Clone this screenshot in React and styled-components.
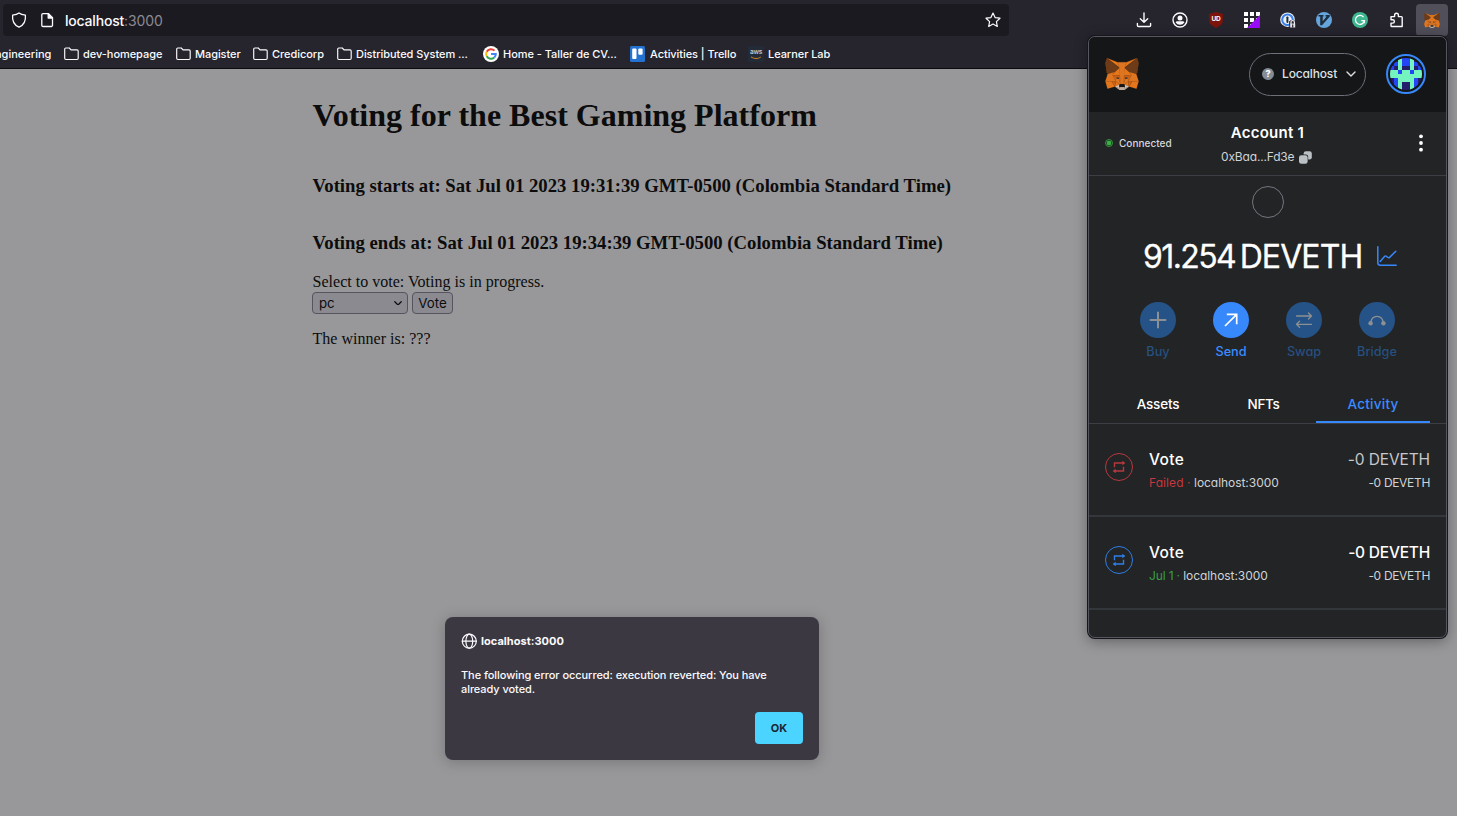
import React from "react";
import styled, { createGlobalStyle } from "styled-components";

const Global = createGlobalStyle`
  * { box-sizing: border-box; }
  html, body { margin: 0; padding: 0; }
  body { background: #98989a; overflow: hidden; }
`;

const ui = `"Inter", "Liberation Sans", sans-serif`;
const serif = `"Liberation Serif", "Times New Roman", serif`;

const Window = styled.div`
  position: relative;
  width: 1457px;
  height: 816px;
  overflow: hidden;
  display: flex;
  flex-direction: column;
  background: #98989a;
`;

/* ---------- browser chrome ---------- */

const Chrome = styled.header`
  height: 69px;
  flex: none;
  background: #26252e;
  border-bottom: 1px solid #0d0c11;
  font-family: ${ui};
  color: #fbfbfe;
`;

const Toolbar = styled.div`
  height: 40px;
  display: flex;
  align-items: center;
  padding-left: 3px;
`;

const UrlBar = styled.div`
  width: 1006px;
  height: 32px;
  border-radius: 4px;
  background: #1b1a20;
  display: flex;
  align-items: center;
  padding: 0 8px;
  svg { flex: none; }
`;

const UrlText = styled.div`
  flex: 1;
  margin-left: 10px;
  font-size: 14px;
  font-weight: 500;
  letter-spacing: -0.2px;
  line-height: 20px;
  padding-top: 1px;
  span { color: #8b8a92; font-weight: 400; letter-spacing: -0.1px; }
`;

const Extensions = styled.div`
  margin-left: auto;
  display: flex;
  align-items: center;
  height: 32px;
  margin-right: 9px;
`;

const ExtButton = styled.div`
  width: 36px;
  height: 32px;
  display: flex;
  align-items: center;
  justify-content: center;
  svg { display: block; }
`;

const ActiveExt = styled(ExtButton)`
  width: 32px;
  margin-left: 2px;
  border-radius: 4px;
  background: #504f5a;
`;

const Bookmarks = styled.nav`
  height: 28px;
  display: flex;
  align-items: center;
`;

const Bookmark = styled.div`
  display: flex;
  align-items: center;
  gap: ${(p) => p.$gap || 4}px;
  width: ${(p) => p.$w}px;
  margin-left: ${(p) => p.$ml || 0}px;
  flex: none;
  font-size: 11px;
  font-weight: 500;
  white-space: nowrap;
  letter-spacing: ${(p) => p.$ls || 0}px;
  line-height: 16px;
  svg { flex: none; display: block; }
`;

/* ---------- page ---------- */

const Page = styled.main`
  flex: 1;
  padding: 28px 0 0 312.5px;
  font-family: ${serif};
  font-size: 16px;
  line-height: 18px;
  color: #0c0c0d;
`;

const Title = styled.h1`
  margin: 0;
  font-size: 32px;
  line-height: 36px;
  letter-spacing: 0.01px;
`;

const Sub = styled.h3`
  margin: ${(p) => p.$top}px 0 0;
  font-size: 18.72px;
  line-height: 21px;
`;

const Line = styled.div`
  margin-top: ${(p) => p.$top}px;
  letter-spacing: 0.02px;
`;

const Form = styled.div`
  display: flex;
  gap: 4px;
  margin: 1px 0 0 -0.5px;
`;

const SelectBox = styled.div`
  width: 96px;
  height: 22px;
  border: 1px solid #55545f;
  border-radius: 4px;
  background: #8b8a91;
  display: flex;
  align-items: center;
  justify-content: space-between;
  padding: 0 5px 0 6px;
  font-family: ${ui};
  font-size: 13.3px;
  letter-spacing: -0.1px;
`;

const VoteButton = styled.button`
  width: 41px;
  height: 22px;
  padding: 0;
  border: 1px solid #55545f;
  border-radius: 4px;
  background: #8b8a91;
  color: #0c0c0d;
  font-family: ${ui};
  font-size: 13.3px;
`;

/* ---------- alert ---------- */

const Dialog = styled.div`
  position: absolute;
  left: 445px;
  top: 617px;
  width: 374px;
  height: 143px;
  padding: 15px 16px 16px;
  border-radius: 8px;
  background: #3b3842;
  box-shadow: 0 2px 14px rgba(20, 20, 26, 0.25);
  font-family: ${ui};
  color: #fbfbfe;
  display: flex;
  flex-direction: column;
`;

const Origin = styled.div`
  display: flex;
  align-items: center;
  gap: 4px;
  height: 17px;
  font-size: 11px;
  font-weight: 700;
  letter-spacing: 0.03px;
`;

const Message = styled.p`
  margin: 19px 0 0;
  font-size: 11px;
  font-weight: 500;
  line-height: 14px;
  letter-spacing: -0.065px;
`;

const OkButton = styled.button`
  margin: auto 0 0 auto;
  width: 48px;
  height: 32px;
  border: 0;
  border-radius: 4px;
  background: #4ad4ff;
  color: #1c2530;
  font-family: ${ui};
  font-size: 11px;
  font-weight: 700;
`;

/* ---------- wallet popup ---------- */

const Popup = styled.aside`
  position: absolute;
  left: 1088px;
  top: 36px;
  width: 359px;
  height: 602px;
  border: 1px solid #565661;
  border-radius: 7px;
  background: #222426;
  box-shadow: 0 0 0 1px #17161b, 0 3px 14px rgba(10, 10, 14, 0.4);
  overflow: hidden;
  font-family: ${ui};
  font-feature-settings: "cv11";
  color: #fff;
`;

const WalletHeader = styled.div`
  height: 75px;
  background: #141618;
  display: flex;
  align-items: center;
  padding: 0 20px 1px 16px;
`;

const NetworkPill = styled.div`
  margin: 1px 20px 0 auto;
  width: 117px;
  height: 43px;
  border: 1px solid #6d6f79;
  border-radius: 22px;
  display: flex;
  align-items: center;
  padding: 0 9px 2px 12px;
  font-size: 12px;
  font-weight: 500;
  letter-spacing: -0.15px;
  color: #dfe1e3;
  svg:last-child { margin-left: auto; }
`;

const QMark = styled.span`
  width: 12px;
  height: 12px;
  border-radius: 50%;
  margin-right: 8px;
  background: #848c96;
  color: #fff;
  font-size: 9px;
  font-weight: 800;
  line-height: 12px;
  text-align: center;
`;

const AccountRow = styled.div`
  height: 64px;
  border-bottom: 1px solid #3b3e42;
  display: grid;
  grid-template-columns: 110px 1fr 110px;
  align-items: center;
  padding: 0 16px 1px;
`;

const Connected = styled.div`
  display: flex;
  align-items: center;
  gap: 6px;
  font-size: 10px;
  font-weight: 500;
  letter-spacing: 0.02px;
  color: #d6d9dc;
`;

const Dot = styled.i`
  width: 8px;
  height: 8px;
  border-radius: 50%;
  border: 1px solid #2f9a38;
  background: radial-gradient(circle, #3fae49 0 2px, #1d3a22 2.6px);
`;

const Account = styled.div`
  text-align: center;
  padding-top: 1px;
`;

const AccountName = styled.div`
  font-size: 15px;
  font-weight: 600;
  line-height: 22px;
  letter-spacing: 0.25px;
`;

const Address = styled.div`
  display: flex;
  align-items: center;
  justify-content: center;
  gap: 5px;
  font-size: 12px;
  line-height: 16px;
  margin-top: 5px;
  padding-right: 1.5px;
  white-space: nowrap;
  letter-spacing: -0.17px;
  color: #d0d3d6;
`;

const Menu = styled.div`
  justify-self: end;
  width: 18px;
  display: flex;
  justify-content: center;
`;

const TokenRing = styled.div`
  width: 32px;
  height: 32px;
  margin: 10px auto 0;
  border: 1px solid #73767e;
  border-radius: 50%;
`;

const Balance = styled.div`
  display: flex;
  align-items: center;
  height: 40px;
  margin: 18px 0 0 54px;
  font-size: 32px;
  white-space: nowrap;
  -webkit-text-stroke: 0.3px #fff;
  svg { flex: none; margin-left: auto; margin-right: 49px; }
`;

const Amount = styled.span`
  letter-spacing: -1.6px;
  margin-right: 4.5px;
`;

const Symbol = styled.span`
  letter-spacing: -0.9px;
`;

const Actions = styled.div`
  display: flex;
  justify-content: center;
  margin-top: 26px;
  padding-right: 1px;
`;

const Action = styled.div`
  width: 73px;
  display: flex;
  flex-direction: column;
  align-items: center;
  gap: 5px;
  color: ${(p) => (p.$on ? "#3b8cff" : "#27507f")};
  font-size: 12.7px;
  font-weight: 500;
  line-height: 17px;
`;

const ActionLabel = styled.span`
  margin-left: 1px;
`;

const ActionCircle = styled.div`
  width: 36px;
  height: 36px;
  border-radius: 50%;
  background: ${(p) => (p.$on ? "#3788fb" : "#255387")};
  color: ${(p) => (p.$on ? "#ffffff" : "#8d9093")};
  display: flex;
  align-items: center;
  justify-content: center;
`;

const Tabs = styled.div`
  display: grid;
  grid-template-columns: 106px 105px 114px;
  height: 39px;
  margin-top: 25px;
  padding-left: 16px;
  border-bottom: 1px solid #3b3e42;
`;

const Tab = styled.div`
  text-align: center;
  font-size: 13.5px;
  font-weight: 500;
  line-height: 38px;
  letter-spacing: ${(p) => p.$ls || 0}px;
  color: ${(p) => (p.$on ? "#3b8cff" : "#fff")};
  box-shadow: ${(p) => (p.$on ? "inset 0 -2px 0 #3788fb" : "none")};
`;

const Item = styled.div`
  height: 93px;
  border-bottom: 2px solid #33363b;
  display: flex;
  align-items: flex-start;
  padding: 24px 16px 0;
`;

const ItemIcon = styled.div`
  width: 28px;
  height: 28px;
  margin: 5px 16px 0 0;
  border: 1px solid;
  border-radius: 50%;
  color: ${(p) => p.$c};
  display: flex;
  align-items: center;
  justify-content: center;
`;

const ItemText = styled.div`
  text-align: ${(p) => (p.$right ? "right" : "left")};
  margin-left: ${(p) => (p.$right ? "auto" : "0")};
`;

const ItemTitle = styled.div`
  font-size: 15.5px;
  font-weight: ${(p) => p.$weight || 500};
  line-height: 24px;
  letter-spacing: ${(p) => p.$ls || 0}px;
  color: ${(p) => p.$c || "#fff"};
`;

const ItemSub = styled.div`
  font-size: 12px;
  line-height: 16px;
  margin-top: 3px;
  letter-spacing: ${(p) => p.$ls || 0}px;
  color: #d0d3d6;
`;

const Status = styled.span`
  color: ${(p) => p.$c};
  letter-spacing: ${(p) => p.$ls}px;
`;

/* ---------- drawings ---------- */

const FOX = [
  ["#E2761B", "274.1,35.5 174.6,109.4 193,65.8"],
  ["#E4761B", "44.4,35.5 143.1,110.1 125.6,65.8"],
  ["#E4761B", "238.3,206.8 211.8,247.4 268.5,263 284.8,207.7"],
  ["#E4761B", "33.9,207.7 50.1,263 106.8,247.4 80.3,206.8"],
  ["#E4761B", "103.6,138.2 87.8,162.1 144.1,164.6 142.1,104.1"],
  ["#E4761B", "214.9,138.2 175.9,103.4 174.6,164.6 230.8,162.1"],
  ["#E4761B", "106.8,247.4 140.6,230.9 111.4,208.1"],
  ["#E4761B", "177.9,230.9 211.8,247.4 207.1,208.1"],
  ["#D7C1B3", "211.8,247.4 177.9,230.9 180.6,253 180.3,262.3"],
  ["#D7C1B3", "106.8,247.4 138.3,262.3 138.1,253 140.6,230.9"],
  ["#233447", "138.8,193.5 110.6,185.2 130.5,176.1"],
  ["#233447", "179.7,193.5 188,176.1 208,185.2"],
  ["#CD6116", "106.8,247.4 111.6,206.8 80.3,207.7"],
  ["#CD6116", "207,206.8 211.8,247.4 238.3,207.7"],
  ["#CD6116", "230.8,162.1 174.6,164.6 179.8,193.5 188.1,176.1 208.1,185.2"],
  ["#CD6116", "110.6,185.2 130.6,176.1 138.8,193.5 144.1,164.6 87.8,162.1"],
  ["#E4751F", "87.8,162.1 111.4,208.1 110.6,185.2"],
  ["#E4751F", "208.1,185.2 207.1,208.1 230.8,162.1"],
  ["#E4751F", "144.1,164.6 138.8,193.5 145.4,227.6 146.9,182.7"],
  ["#E4751F", "174.6,164.6 171.9,182.6 173.1,227.6 179.8,193.5"],
  ["#DE7520", "179.8,193.5 173.1,227.6 177.9,230.9 207.1,208.1 208.1,185.2"],
  ["#DE7520", "110.6,185.2 111.4,208.1 140.6,230.9 145.4,227.6 138.8,193.5"],
  ["#C0AD9E", "180.3,262.3 180.6,253 178.1,250.8 140.4,250.8 138.1,253 138.3,262.3 106.8,247.4 117.8,256.4 140.1,271.9 178.4,271.9 200.8,256.4 211.8,247.4"],
  ["#161616", "177.9,230.9 173.1,227.6 145.4,227.6 140.6,230.9 138.1,253 140.4,250.8 178.1,250.8 180.6,253"],
  ["#6E3B18", "278.3,114.2 286.8,73.4 274.1,35.5 177.9,106.9 214.9,138.2 267.2,153.5 278.8,140 273.8,136.4 281.8,129.1 275.6,124.3 283.6,118.2"],
  ["#6E3B18", "31.8,73.4 40.3,114.2 34.9,118.2 42.9,124.3 36.8,129.1 44.8,136.4 39.8,140 51.3,153.5 103.6,138.2 140.6,106.9 44.4,35.5"],
  ["#DE7520", "267.2,153.5 214.9,138.2 230.8,162.1 207.1,208.1 238.3,207.7 284.8,207.7"],
  ["#DE7520", "103.6,138.2 51.3,153.5 33.9,207.7 80.3,207.7 111.4,208.1 87.8,162.1"],
  ["#DE7520", "174.6,164.6 177.9,106.9 193.1,65.8 125.6,65.8 140.6,106.9 144.1,164.6 145.3,182.8 145.4,227.6 173.1,227.6 173.3,182.8"],
];

const Fox = ({ w, h }) => (
  <svg width={w} height={h} viewBox="31 35 256.6 237.6" preserveAspectRatio="none">
    {FOX.map(([fill, points], i) => (
      <polygon key={i} fill={fill} stroke={fill} strokeWidth="1" points={points} />
    ))}
  </svg>
);

/* left half of each identicon row; the right half mirrors it */
const CELLS = ["nngb", "nbgb", "bngn", "ggbg", "gggg", "nbgg", "nbgn", "nbgn"];
const CELL_COLORS = { n: "#241f6b", b: "#2347f5", g: "#74f5c0" };

const Identicon = () => (
  <svg width="40" height="40" viewBox="0 0 40 40">
    <defs>
      <clipPath id="avatar"><circle cx="20" cy="20" r="16" /></clipPath>
    </defs>
    <circle cx="20" cy="20" r="19" fill="#141618" stroke="#3788fb" strokeWidth="2" />
    <g clipPath="url(#avatar)" shapeRendering="crispEdges">
      {CELLS.map((row, y) =>
        (row + [...row].reverse().join("")).split("").map((c, x) => (
          <rect key={x + "-" + y} x={4 + x * 4} y={4 + y * 4} width="4" height="4" fill={CELL_COLORS[c]} />
        ))
      )}
    </g>
  </svg>
);

const Stroke = ({ w = 16, h = 16, vb, sw = 1.3, children, ...rest }) => (
  <svg width={w} height={h} viewBox={vb || `0 0 ${w} ${h}`} fill="none" stroke="currentColor"
    strokeWidth={sw} strokeLinecap="round" strokeLinejoin="round" {...rest}>
    {children}
  </svg>
);

const Shield = () => (
  <Stroke><path d="M8 .9C9.6 2.2 12 2.9 14.4 3.2c.5 5-1.300 9.700-6.400 11.900C2.900 12.900 1.100 8.200 1.600 3.200 4 2.900 6.400 2.200 8 .9z" /></Stroke>
);

const DocIcon = styled.span`
  display: flex;
  margin-left: 12px;
`;

const PageIcon = () => (
  <DocIcon>
    <Stroke>
      <path d="M4 1.700h5.500l4 4v7.600a1.200 1.200 0 0 1-1.200 1.200H4a1.200 1.200 0 0 1-1.200-1.200V2.900A1.200 1.200 0 0 1 4 1.700z" />
      <path d="M9.200 1.700v4.300h4.300z" fill="currentColor" />
    </Stroke>
  </DocIcon>
);

const Star = () => (
  <Stroke sw={1.2}><path d="M8 1.100l2.100 4.500 4.900.6-3.600 3.400.9 4.900L8 12.100l-4.300 2.400.9-4.900L1 6.200l4.900-.6z" /></Stroke>
);

const Folder = () => (
  <Stroke w={15} h={14} sw={1.150}>
    <path d="M1.800 1h3.500l1.700 1.900h6a1.200 1.200 0 0 1 1.200 1.200v7.200a1.200 1.200 0 0 1-1.200 1.200H1.900A1.200 1.200 0 0 1 .7 11.300V2.100A1.100 1.100 0 0 1 1.800 1z" />
  </Stroke>
);

const Google = () => (
  <svg width="16" height="16" viewBox="0 0 16 16">
    <circle cx="8" cy="8" r="8" fill="#fff" />
    <g fill="none" strokeWidth="2">
      <path d="M11.500 4.600A4.900 4.900 0 0 0 3.700 5.700" stroke="#ea4335" />
      <path d="M3.700 5.700a4.900 4.900 0 0 0 0 4.600" stroke="#fbbc05" />
      <path d="M3.700 10.300a4.900 4.900 0 0 0 7.600 1.200" stroke="#34a853" />
      <path d="M11.300 11.500A4.700 4.700 0 0 0 12.800 8H8.100" stroke="#4285f4" />
    </g>
  </svg>
);

const Trello = () => (
  <svg width="15" height="16" viewBox="0 0 15 16">
    <rect width="15" height="16" rx="1.500" fill="#2472cf" />
    <rect x="2.200" y="2.500" width="4.300" height="10.500" rx="1" fill="#fff" />
    <rect x="8.300" y="2.500" width="4.300" height="6.300" rx="1" fill="#fff" />
  </svg>
);

const AwsTile = styled.span`
  width: 16px;
  height: 16px;
  background: #232a38;
  display: flex;
  flex-direction: column;
  align-items: center;
  font-size: 6.5px;
  font-weight: 600;
  line-height: 7px;
  letter-spacing: -0.3px;
  padding-top: 3px;
  color: #c5c8ce;
`;

const Aws = () => (
  <AwsTile>
    aws
    <svg width="12" height="4" viewBox="0 0 12 4"><path d="M1 .8C4 3 8 3 10.800 1" fill="none" stroke="#d98a1c" /></svg>
  </AwsTile>
);

const Download = () => (
  <Stroke sw={1.400}><path d="M8 1v9M4.300 6.700L8 10.300l3.700-3.600M1.400 11.500v2a1 1 0 0 0 1 1h11.200a1 1 0 0 0 1-1v-2" /></Stroke>
);

const Person = () => (
  <svg width="16" height="16" viewBox="0 0 16 16">
    <circle cx="8" cy="8" r="7" fill="none" stroke="#fbfbfe" strokeWidth="1.400" />
    <circle cx="8" cy="5.900" r="2.500" fill="#fbfbfe" />
    <path d="M3.600 10.300c.5-.8 1-1 1.900-1h5c.9 0 1.400.2 1.900 1-.9 1.700-2.500 2.500-4.400 2.500s-3.500-.8-4.400-2.500z" fill="#fbfbfe" />
  </svg>
);

const UBadge = styled.span`
  width: 14px;
  height: 16px;
  background: #7c140c;
  clip-path: polygon(50% 0, 100% 12%, 97% 65%, 85% 82%, 50% 100%, 15% 82%, 3% 65%, 0 12%);
  color: #fff;
  font-size: 6.500px;
  font-weight: 700;
  letter-spacing: -0.2px;
  text-align: center;
  line-height: 15px;
`;

const GridIcon = () => (
  <svg width="16" height="16" viewBox="0 0 16 16" shapeRendering="crispEdges">
    <g fill="#fff">
      {[0, 6, 12].map((y) => [0, 6, 12].map((x) => <rect key={x + y * 20} x={x} y={y} width="4" height="4" />))}
    </g>
    <path d="M16 3V16H3z" fill="#9a0cf8" shapeRendering="auto" />
  </svg>
);

const OnePass = () => (
  <svg width="16" height="16" viewBox="0 0 16 16">
    <circle cx="7.500" cy="7.700" r="7.300" fill="#eef1f6" />
    <circle cx="7.500" cy="7.700" r="5.300" fill="none" stroke="#3b82e8" strokeWidth="2" />
    <rect x="6.400" y="4.500" width="2" height="6.400" rx=".8" fill="#1d2c44" />
    <path d="M9 9.500l2-1.500h3l2 2v6H9.500z" fill="#26252e" />
    <path d="M11 12v-1.800a1.700 1.700 0 0 1 3.400 0V12" fill="none" stroke="#eef1f6" strokeWidth="1.200" />
    <path d="M10.200 11.600h5v3.900h-5z" fill="#e6e8ee" />
    <path d="M12.100 12.600h1.200v2.900h-1.200z" fill="#26252e" />
  </svg>
);

const Vim = () => (
  <svg width="16" height="16" viewBox="0 0 16 16">
    <circle cx="8" cy="8" r="8" fill="#65a5dd" />
    <path d="M2.500 3h5v1.500H6.700v4.800l4-4.800H9.500V3h4.300v1.500L6 13.300H4.200V4.500H2.500z" fill="#1f2c3c" />
  </svg>
);

const Grammarly = () => (
  <svg width="16" height="16" viewBox="0 0 16 16">
    <circle cx="8" cy="8" r="8" fill="#3fb68f" />
    <path d="M11.500 5.100a4.500 4.500 0 1 0 .9 3.500H9.300" fill="none" stroke="#fff" strokeWidth="1.300" />
    <path d="M12.300 8.600v2.600" fill="none" stroke="#fff" strokeWidth="1.200" />
  </svg>
);

const Puzzle = () => (
  <Stroke sw={1.400}>
    <path d="M3 4.600h3.600V3.100a1.900 1.900 0 0 1 3.800 0v1.500h3a.8.8 0 0 1 .8.8v9.100H3.800a.8.8 0 0 1-.8-.8v-2.600h1.700a1.700 1.700 0 0 0 0-3.400H3z" />
  </Stroke>
);

const Globe = () => (
  <Stroke sw={1.200}>
    <circle cx="8.300" cy="8.200" r="7" />
    <ellipse cx="8.300" cy="8.200" rx="3.400" ry="7" />
    <path d="M1.300 8.200h14" />
  </Stroke>
);

const Chevron = ({ w = 10, sw = 1.400 }) => (
  <Stroke w={w} h={w * 0.6} vb="0 0 10 6" sw={sw}><path d="M1 1l4 4 4-4" /></Stroke>
);

const Copy = () => (
  <svg width="13" height="13" viewBox="0 0 14 14">
    <rect x="5" y=".3" width="8.800" height="8.800" rx="2.500" fill="#bbc0c5" />
    <rect x="-.5" y="3.800" width="10.400" height="10.600" rx="2.500" fill="#222426" />
    <rect x="0" y="4.500" width="9.300" height="9.300" rx="2.500" fill="#bbc0c5" />
  </svg>
);

const Dots = () => (
  <svg width="4" height="18" viewBox="0 0 4 18" fill="#fff">
    <circle cx="2" cy="2.300" r="1.900" /><circle cx="2" cy="9" r="1.900" /><circle cx="2" cy="15.700" r="1.900" />
  </svg>
);

const ChartIcon = () => (
  <Stroke w={20} h={20} sw={1.500} color="#3788fb">
    <path d="M.8.8v16a2.400 2.400 0 0 0 2.400 2.400h16M3.200 15.500l4.500-5.200a1.200 1.200 0 0 1 1.700-.1l1.500 1.300a1.200 1.200 0 0 0 1.700-.1l6.200-6.200" />
  </Stroke>
);

const Plus = () => <Stroke w={18} h={18} sw={2}><path d="M9 1.500v15M1.500 9h15" /></Stroke>;
const ArrowUpRight = () => (
  <Stroke w={14} h={14} sw={1.700} strokeLinecap="butt" strokeLinejoin="miter"><path d="M1 13L12.700 1.300M2.800 1.300h9.900v9.900" /></Stroke>
);
const SwapIcon = () => (
  <Stroke w={18} h={16} sw={1.300}><path d="M1.500 4h15M13.500 1l3 3-3 3M16.500 12.300h-15M4.500 9.300l-3 3 3 3" /></Stroke>
);
const BridgeIcon = () => (
  <svg width="18" height="12" viewBox="0 0 18 12" fill="none" stroke="currentColor" strokeWidth="1.300">
    <path d="M2.600 9C3.200 4.800 5.800 2.300 9 2.300s5.800 2.500 6.400 6.700" />
    <circle cx="2.600" cy="9.300" r="2.200" fill="currentColor" stroke="none" />
    <circle cx="15.400" cy="9.300" r="2.200" fill="currentColor" stroke="none" />
  </svg>
);
const Interaction = () => (
  <svg width="14" height="12" viewBox="0 0 14 12" fill="none" stroke="currentColor" strokeWidth="1.400">
    <path d="M2.500 6.300V2h8.500M11.500 5.700V10H3" />
    <path d="M10.300-.3L13.400 2l-3.100 2.300zM3.700 7.700L.6 10l3.100 2.300z" fill="currentColor" stroke="none" />
  </svg>
);

/* ---------- content ---------- */

const ACTIONS = [
  ["Buy", Plus, false],
  ["Send", ArrowUpRight, true],
  ["Swap", SwapIcon, false],
  ["Bridge", BridgeIcon, false],
];

const ITEMS = [
  { color: "#b8383f", status: "Failed", statusColor: "#c5393f", amount: "#c6c8ca", weight: 400, ls: 0.08, aLs: -0.12 },
  { color: "#2f7de6", status: "Jul 1", statusColor: "#3a9f43", amount: "#ffffff", weight: 500, ls: -0.15, aLs: -0.22 },
];

export default function App() {
  return (
    <Window>
      <Global />
      <Chrome>
        <Toolbar>
          <UrlBar>
            <Shield />
            <PageIcon />
            <UrlText>localhost<span>:3000</span></UrlText>
            <Star />
          </UrlBar>
          <Extensions>
            <ExtButton><Download /></ExtButton>
            <ExtButton><Person /></ExtButton>
            <ExtButton><UBadge>UD</UBadge></ExtButton>
            <ExtButton><GridIcon /></ExtButton>
            <ExtButton><OnePass /></ExtButton>
            <ExtButton><Vim /></ExtButton>
            <ExtButton><Grammarly /></ExtButton>
            <ExtButton><Puzzle /></ExtButton>
            <ActiveExt><Fox w={16} h={15} /></ActiveExt>
          </Extensions>
        </Toolbar>
        <Bookmarks>
          <Bookmark $w={69} $ml={-5}>ngineering</Bookmark>
          <Bookmark $w={112} $ls={-0.05}><Folder />dev-homepage</Bookmark>
          <Bookmark $w={77} $ls={-0.07}><Folder />Magister</Bookmark>
          <Bookmark $w={84} $ls={-0.04}><Folder />Credicorp</Bookmark>
          <Bookmark $w={146} $ls={-0.05}><Folder />Distributed System ...</Bookmark>
          <Bookmark $w={147} $ls={-0.05}><Google />Home - Taller de CV...</Bookmark>
          <Bookmark $w={118} $gap={5} $ls={-0.06}><Trello />Activities | Trello</Bookmark>
          <Bookmark $w={90} $ls={-0.06}><Aws />Learner Lab</Bookmark>
        </Bookmarks>
      </Chrome>

      <Page>
        <Title>Voting for the Best Gaming Platform</Title>
        <Sub $top={42}>Voting starts at: Sat Jul 01 2023 19:31:39 GMT-0500 (Colombia Standard Time)</Sub>
        <Sub $top={36}>Voting ends at: Sat Jul 01 2023 19:34:39 GMT-0500 (Colombia Standard Time)</Sub>
        <Line $top={20}>Select to vote: Voting is in progress.</Line>
        <Form>
          <SelectBox>pc<Chevron w={8} sw={1.6} /></SelectBox>
          <VoteButton>Vote</VoteButton>
        </Form>
        <Line $top={16}>The winner is: ???</Line>
      </Page>

      <Dialog>
        <Origin><Globe />localhost:3000</Origin>
        <Message>The following error occurred: execution reverted: You have already voted.</Message>
        <OkButton>OK</OkButton>
      </Dialog>

      <Popup>
        <WalletHeader>
          <Fox w={34} h={32} />
          <NetworkPill><QMark>?</QMark>Localhost<Chevron /></NetworkPill>
          <Identicon />
        </WalletHeader>
        <AccountRow>
          <Connected><Dot />Connected</Connected>
          <Account>
            <AccountName>Account 1</AccountName>
            <Address>0xBaa...Fd3e<Copy /></Address>
          </Account>
          <Menu><Dots /></Menu>
        </AccountRow>
        <TokenRing />
        <Balance><Amount>91.254</Amount><Symbol>DEVETH</Symbol><ChartIcon /></Balance>
        <Actions>
          {ACTIONS.map(([label, Icon, on]) => (
            <Action key={label} $on={on}>
              <ActionCircle $on={on}><Icon /></ActionCircle>
              <ActionLabel>{label}</ActionLabel>
            </Action>
          ))}
        </Actions>
        <Tabs>
          <Tab $ls={-0.2}>Assets</Tab>
          <Tab $ls={-0.3}>NFTs</Tab>
          <Tab $on $ls={0.25}>Activity</Tab>
        </Tabs>
        {ITEMS.map((it) => (
          <Item key={it.status}>
            <ItemIcon $c={it.color}><Interaction /></ItemIcon>
            <ItemText>
              <ItemTitle $ls={0.35}>Vote</ItemTitle>
              <ItemSub $ls={-0.05}><Status $c={it.statusColor} $ls={it.ls}>{it.status} · </Status>localhost:3000</ItemSub>
            </ItemText>
            <ItemText $right>
              <ItemTitle $c={it.amount} $weight={it.weight} $ls={it.aLs}>-0 DEVETH</ItemTitle>
              <ItemSub $ls={-0.32}>-0 DEVETH</ItemSub>
            </ItemText>
          </Item>
        ))}
      </Popup>
    </Window>
  );
}
